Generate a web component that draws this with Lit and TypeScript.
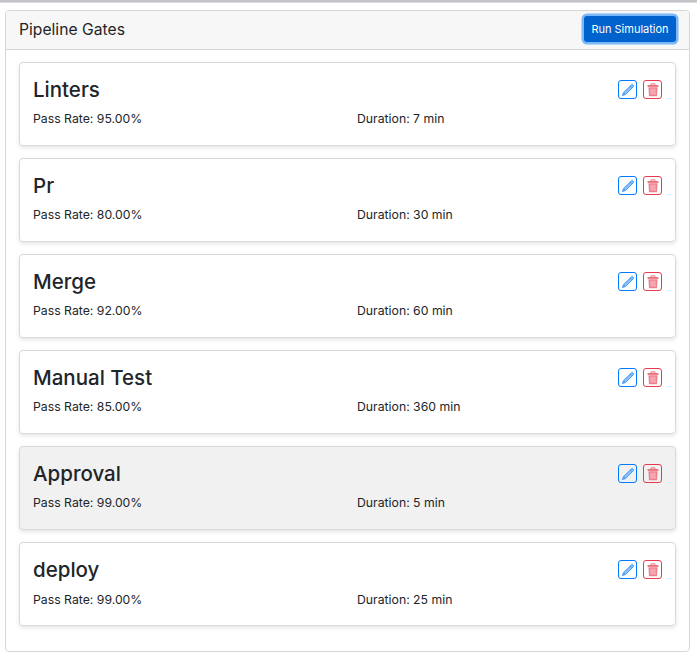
import { LitElement, html, css, svg } from 'lit';
import { customElement } from 'lit/decorators.js';

interface Gate {
  name: string;
  passRate: string;
  duration: number;
  active?: boolean;
}

const GATES: Gate[] = [
  { name: 'Linters', passRate: '95.00', duration: 7 },
  { name: 'Pr', passRate: '80.00', duration: 30 },
  { name: 'Merge', passRate: '92.00', duration: 60 },
  { name: 'Manual Test', passRate: '85.00', duration: 360 },
  { name: 'Approval', passRate: '99.00', duration: 5, active: true },
  { name: 'deploy', passRate: '99.00', duration: 25 },
];

const pencilIcon = svg`
  <path d="M12 2a1.1 1.1 0 0 1 1.6 0l.5.5a1.1 1.1 0 0 1 0 1.6L5 13.2l-3.3 1.1 1.1-3.3z" fill="#8fc3fb" stroke="#2b8af5" stroke-width="1" stroke-linejoin="round"/>
  <path d="M10.6 3.4l2 2M2.9 11l2 2" stroke="#2b8af5" stroke-width="0.9" fill="none"/>
`;

const trashIcon = svg`
  <path d="M1.8 2.4h12.4v1.9H1.8z" fill="#e8606e"/>
  <path d="M5.8 2.8V1h4.4v1.8" fill="none" stroke="#e8606e" stroke-width="1"/>
  <path d="M2.8 4.8h10.4l-.6 10.4H3.4z" fill="#ee7f8b"/>
  <path d="M5.8 6.4v7M8 6.4v7M10.2 6.4v7" stroke="#fbdfe2" stroke-width="0.9"/>
`;

@customElement('app-root')
export class AppRoot extends LitElement {
  static styles = css`
    :host {
      display: block;
      height: 663px;
      overflow: hidden;
      background: #fff;
      font-family: Inter, 'Liberation Sans', sans-serif;
      color: #212529;
    }

    .topline {
      height: 3px;
      background: linear-gradient(#c3c4c7 66%, #dcdcde 66%);
    }

    .panel {
      margin: 7px 7px 0 5px;
      height: 642px;
      box-sizing: border-box;
      border: 1px solid #d5d6d7;
      border-radius: 4px;
      background: #fff;
    }

    .panel-header {
      height: 39px;
      box-sizing: border-box;
      padding: 0 13px 2px 13px;
      display: flex;
      align-items: center;
      justify-content: space-between;
      background: #f7f7f7;
      border-bottom: 1px solid #d5d6d7;
      border-radius: 3px 3px 0 0;
    }

    .panel-title {
      font-size: 15.7px;
      font-weight: 400;
    }

    .run {
      height: 26px;
      width: 92px;
      padding: 0;
      border: 0;
      border-radius: 3px;
      background: #0062cc;
      color: #fff;
      font: 400 11px Inter, 'Liberation Sans', sans-serif;
      box-shadow: 0 0 0 2.5px #7ab8f7;
    }

    .panel-body {
      padding: 12px 13px;
      display: flex;
      flex-direction: column;
      gap: 12px;
    }

    .gate {
      height: 84.08px;
      box-sizing: border-box;
      padding: 14px 13px 0;
      border: 1px solid #d8d9da;
      border-radius: 4px;
      background: #fff;
      box-shadow: 0 2px 4px rgba(0, 0, 0, 0.1);
    }

    .gate.active {
      background: #f1f1f1;
    }

    .gate-top {
      display: flex;
      justify-content: space-between;
      align-items: flex-start;
      height: 30px;
    }

    .gate-name {
      font-size: 20.5px;
      font-weight: 500;
      line-height: 26px;
    }

    .actions {
      display: flex;
      gap: 6px;
      margin-top: 3px;
    }

    .icon-btn {
      width: 19px;
      height: 19px;
      box-sizing: border-box;
      padding: 0;
      display: flex;
      align-items: center;
      justify-content: center;
      background: transparent;
      border-radius: 3px;
      border: 1px solid #007bff;
    }

    .icon-btn.danger {
      border-color: #e03e4e;
    }

    .icon-btn svg {
      width: 14px;
      height: 14px;
    }

    .gate-meta {
      display: grid;
      grid-template-columns: 324px 1fr;
      font-size: 12.25px;
      line-height: 18px;
      margin-top: 3.15px;
    }
  `;

  render() {
    return html`
      <div class="topline"></div>
      <section class="panel">
        <header class="panel-header">
          <span class="panel-title">Pipeline Gates</span>
          <button class="run">Run Simulation</button>
        </header>
        <div class="panel-body">
          ${GATES.map(
            (g) => html`
              <article class="gate ${g.active ? 'active' : ''}">
                <div class="gate-top">
                  <span class="gate-name">${g.name}</span>
                  <div class="actions">
                    <button class="icon-btn"><svg viewBox="0 0 16 16">${pencilIcon}</svg></button>
                    <button class="icon-btn danger"><svg viewBox="0 0 16 16">${trashIcon}</svg></button>
                  </div>
                </div>
                <div class="gate-meta">
                  <span>Pass Rate: ${g.passRate}%</span>
                  <span>Duration: ${g.duration} min</span>
                </div>
              </article>
            `
          )}
        </div>
      </section>
    `;
  }
}
